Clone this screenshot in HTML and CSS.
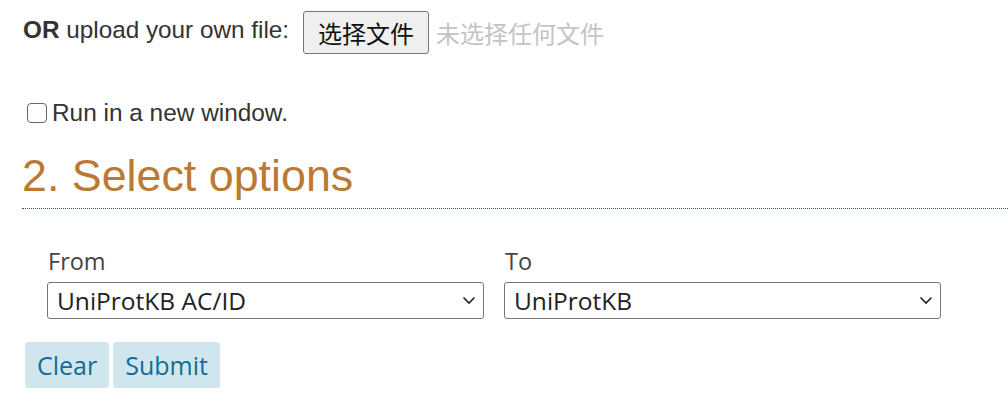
FILE: index.html
```html
<!DOCTYPE html>
<html lang="en">
<head>
<meta charset="utf-8">
<title>Select options</title>
<link rel="stylesheet" href="styles.css">
</head>
<body>
<div class="page">
  <div class="upload">
    <span class="upload-label"><b>OR</b> upload your own file:</span>
    <button type="button" class="file-btn">选择文件</button>
    <span class="file-none">未选择任何文件</span>
  </div>
  <label class="newwin">
    <input type="checkbox" class="chk">
    <span>Run in a new window.</span>
  </label>
  <h2 class="section-title">2. Select options</h2>
  <div class="options">
    <div class="field">
      <label class="field-label" for="from">From</label>
      <div class="select">
        <span class="select-value">UniProtKB AC/ID</span>
        <svg class="chev" width="14" height="9" viewBox="0 0 14 9"><path d="M1.5 1.5 L7 7 L12.5 1.5" fill="none" stroke="#222" stroke-width="1.6"/></svg>
      </div>
    </div>
    <div class="field">
      <label class="field-label" for="to">To</label>
      <div class="select">
        <span class="select-value">UniProtKB</span>
        <svg class="chev" width="14" height="9" viewBox="0 0 14 9"><path d="M1.5 1.5 L7 7 L12.5 1.5" fill="none" stroke="#222" stroke-width="1.6"/></svg>
      </div>
    </div>
  </div>
  <div class="actions">
    <button type="button" class="btn">Clear</button>
    <button type="button" class="btn">Submit</button>
  </div>
</div>
</body>
</html>
```
FILE: styles.css
```css
html, body {
  margin: 0;
  padding: 0;
  background: #fff;
}
.page {
  padding-left: 22px;
  font-family: "Liberation Sans", Arial, sans-serif;
  color: #333;
}
.upload {
  display: flex;
  align-items: center;
  padding-top: 11px;
  height: 43px;
}
.upload-label {
  font-size: 24.3px;
  line-height: 28px;
  margin-left: 1px;
  margin-right: 14px;
  margin-top: -6px;
}
.upload-label b {
  font-weight: bold;
}
.file-btn {
  height: 43px;
  width: 126px;
  padding: 0;
  font-family: "Noto Sans CJK SC", sans-serif;
  font-size: 24px;
  color: #111;
  background: #efefef;
  border: 1px solid #767676;
  border-radius: 3px;
}
.file-none {
  margin-left: 7px;
  font-family: "Noto Sans CJK SC", sans-serif;
  font-size: 24px;
  color: #c4c4c4;
}
.newwin {
  display: flex;
  align-items: center;
  height: 28px;
  margin-top: 45px;
  margin-left: 5px;
  font-size: 24.4px;
  color: #333;
}
.chk {
  appearance: none;
  -webkit-appearance: none;
  width: 20px;
  height: 20px;
  margin: 0 5px 0 0;
  border: 1.5px solid #666;
  border-radius: 4px;
  background: #fff;
  box-sizing: border-box;
}
.section-title {
  margin: 22px 0 0 0;
  padding-bottom: 7px;
  font-size: 44.8px;
  font-weight: normal;
  line-height: 52px;
  color: #bb7a31;
  border-bottom: 1px dotted #1c6384;
}
.options {
  display: flex;
  gap: 20px;
  margin-top: 37px;
  padding-left: 25px;
  font-family: "Open Sans", "Noto Sans", sans-serif;
}
.field {
  display: flex;
  flex-direction: column;
}
.field-label {
  font-size: 23.5px;
  color: #444;
  line-height: 30px;
  margin-left: 1px;
  margin-bottom: 6px;
}
.select {
  width: 437px;
  height: 37px;
  box-sizing: border-box;
  border: 1px solid #767676;
  border-radius: 3px;
  display: flex;
  align-items: center;
  justify-content: space-between;
  padding: 0 7px 0 9px;
}
.select-value {
  font-size: 24.5px;
  color: #222;
}
.actions {
  display: flex;
  gap: 4px;
  margin-top: 23px;
  margin-left: 3px;
}
.btn {
  height: 46px;
  padding: 0 12px;
  font-family: "Open Sans", "Noto Sans", sans-serif;
  font-size: 25px;
  color: #166b94;
  background: #cfe6ee;
  border: none;
  border-radius: 3px;
}
```
